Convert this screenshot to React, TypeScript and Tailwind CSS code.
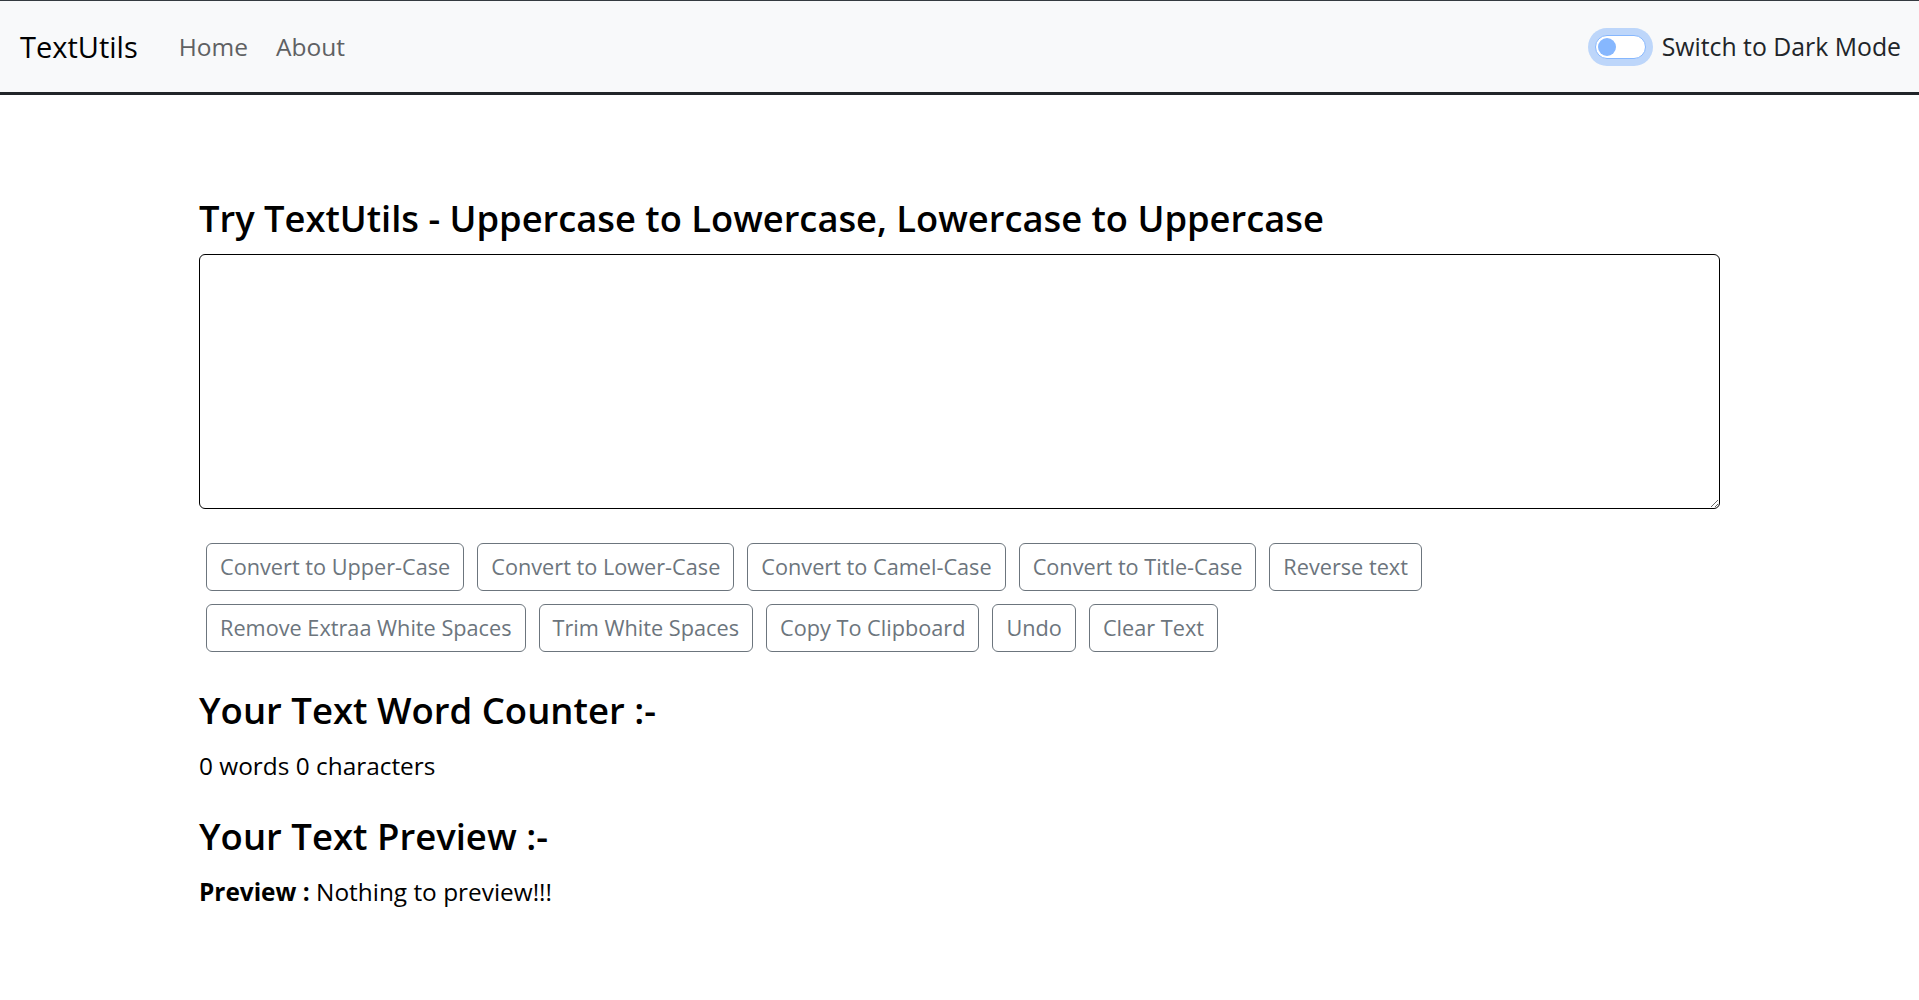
import { useState } from 'react';

const rowOne = [
  'Convert to Upper-Case',
  'Convert to Lower-Case',
  'Convert to Camel-Case',
  'Convert to Title-Case',
  'Reverse text',
];

const rowTwo = [
  'Remove Extraa White Spaces',
  'Trim White Spaces',
  'Copy To Clipboard',
  'Undo',
  'Clear Text',
];

function ActionButton({ label }: { label: string }) {
  return (
    <button className="h-[48px] px-[13px] rounded-[6px] border border-[#6c757d] bg-white text-[21.7px] leading-none text-[#6c757d] whitespace-nowrap">
      {label}
    </button>
  );
}

export default function App() {
  const [text, setText] = useState('');
  const words = text.split(/\s+/).filter((w) => w.length > 0).length;

  return (
    <div className="min-h-screen bg-white font-['Open_Sans',sans-serif] text-[#212529]">
      {/* Navbar */}
      <nav className="box-border h-[95px] flex items-center bg-[#f8f9fa] border-t border-t-[#343a40] border-b-[3px] border-b-[#212529] pl-[20px] pr-[18px]">
        <a className="text-[29px] leading-none text-black">TextUtils</a>
        <ul className="flex items-center ml-[27px] pt-[2px]">
          <li>
            <a className="px-[14px] text-[24.5px] text-[#5f6163]">Home</a>
          </li>
          <li>
            <a className="px-[14px] text-[24.5px] text-[#5f6163]">About</a>
          </li>
        </ul>
        <div className="ml-auto flex items-center">
          <span className="inline-flex items-center w-[51px] h-[24px] rounded-full border border-[#86b7fe] bg-white shadow-[0_0_0_7px_rgba(13,110,253,0.25)] mr-[16px]">
            <span className="ml-[2px] w-[18px] h-[18px] rounded-full bg-[#86b7fe]" />
          </span>
          <span className="text-[24.8px] text-[#212529]">Switch to Dark Mode</span>
        </div>
      </nav>

      {/* Main */}
      <main className="w-[1521px] mx-auto pt-[102px]">
        <h1 className="text-[36.3px] font-semibold leading-[1.2] text-black mb-[13px]">
          Try TextUtils - Uppercase to Lowercase, Lowercase to Uppercase
        </h1>
        <textarea
          className="block w-full h-[255px] rounded-[6px] border border-black bg-white p-[12px] text-[24px] outline-none"
          value={text}
          onChange={(e) => setText(e.target.value)}
        />

        <div className="flex flex-col gap-[13px] mt-[34px] pl-[7px]">
          <div className="flex gap-[13px]">
            {rowOne.map((b) => (
              <ActionButton key={b} label={b} />
            ))}
          </div>
          <div className="flex gap-[13px]">
            {rowTwo.map((b) => (
              <ActionButton key={b} label={b} />
            ))}
          </div>
        </div>

        <h2 className="text-[36.5px] font-semibold leading-[1.2] text-black mt-[37px] mb-[16px]">
          Your Text Word Counter :-
        </h2>
        <p className="text-[24.4px] leading-[1.5] text-black">
          {words} words {text.length} characters
        </p>

        <h2 className="text-[36.5px] font-semibold leading-[1.2] text-black mt-[30px] mb-[15px]">
          Your Text Preview :-
        </h2>
        <p className="text-[24.4px] leading-[1.5] text-black">
          <b className="font-bold">Preview :</b> {text.length > 0 ? text : 'Nothing to preview!!!'}
        </p>
      </main>
    </div>
  );
}
